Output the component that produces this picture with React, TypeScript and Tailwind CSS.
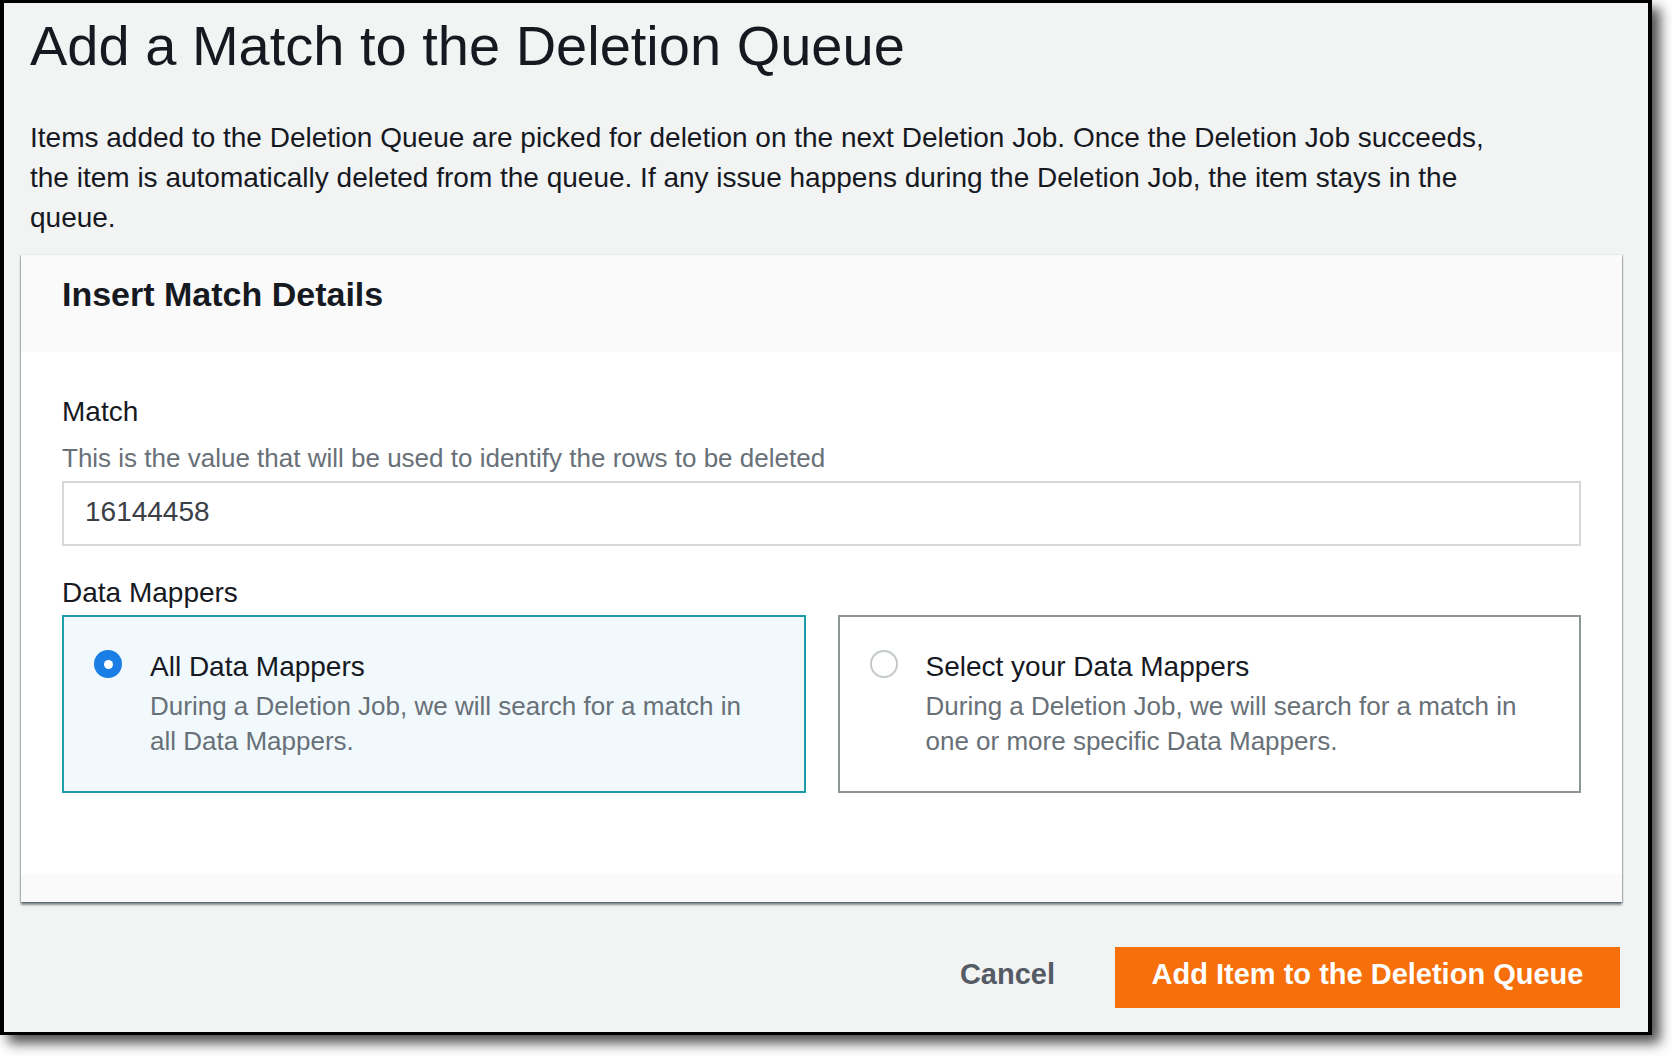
import React from "react";

function Radio({ checked }: { checked: boolean }) {
  if (checked) {
    return (
      <div className="mt-[3px] flex h-[28px] w-[28px] shrink-0 items-center justify-center rounded-full bg-[#1b7ee6]">
        <div className="h-[9px] w-[9px] rounded-full bg-white" />
      </div>
    );
  }
  return (
    <div className="mt-[3px] h-[28px] w-[28px] shrink-0 rounded-full border-2 border-[#c3c9cc] bg-white" />
  );
}

function Tile({
  checked,
  title,
  desc,
}: {
  checked: boolean;
  title: string;
  desc: string;
}) {
  return (
    <div
      className={
        checked
          ? "flex h-[178px] gap-[28px] border-2 border-[#1d9cab] bg-[#f1f9fd] pl-[30px] pr-[44px] pt-[30px]"
          : "flex h-[178px] gap-[28px] border-2 border-[#8d9596] bg-white pl-[30px] pr-[44px] pt-[30px]"
      }
    >
      <Radio checked={checked} />
      <div className="flex flex-col">
        <div className="text-[28px] leading-[40px] text-[#16191f]">{title}</div>
        <div className="mt-[2px] text-[26px] leading-[35px] text-[#687078]">{desc}</div>
      </div>
    </div>
  );
}

export default function App() {
  return (
    <div className="h-[1056px] w-[1672px] bg-white font-['Liberation_Sans',Arial,Helvetica,sans-serif]">
      <div className="flex h-[1035px] w-[1652px] flex-col border-x-4 border-y-[3px] border-black bg-[#f2f3f3] shadow-[8px_8px_12px_rgba(0,0,0,0.7)]">
        <h1 className="ml-[26px] mt-[11px] text-[56px] font-normal leading-[64px] text-[#16191f]">
          Add a Match to the Deletion Queue
        </h1>
        <p className="ml-[26px] mt-[40px] w-[1475px] text-[28px] leading-[40px] text-[#16191f]">
          Items added to the Deletion Queue are picked for deletion on the next Deletion Job. Once the
          Deletion Job succeeds, the item is automatically deleted from the queue. If any issue happens
          during the Deletion Job, the item stays in the queue.
        </p>

        <div className="ml-[17px] mr-[26px] mt-[16px] flex flex-col border-t border-[#e6eaea] bg-white shadow-[1px_1px_1px_rgba(0,28,36,0.18),-1px_1px_1px_rgba(0,28,36,0.18),0_3px_2px_rgba(0,28,36,0.45)]">
          <div className="h-[97px] bg-[#fafafa] pl-[41px] pt-[19px]">
            <h2 className="text-[34px] font-bold leading-[40px] text-[#16191f]">Insert Match Details</h2>
          </div>
          <div className="flex flex-col px-[41px] pb-[81px] pt-[40px]">
            <div className="text-[28px] leading-[40px] text-[#16191f]">Match</div>
            <div className="mt-[6px] text-[26px] leading-[40px] text-[#687078]">
              This is the value that will be used to identify the rows to be deleted
            </div>
            <div className="mt-[3px] flex h-[65px] items-center border-2 border-[#d5d9da] bg-white pb-[3px] pl-[21px] text-[28px] text-[#3b4047]">
              16144458
            </div>
            <div className="mt-[27px] text-[28px] leading-[40px] text-[#16191f]">Data Mappers</div>
            <div className="mt-[2px] grid grid-cols-2 gap-[32px]">
              <Tile
                checked
                title="All Data Mappers"
                desc="During a Deletion Job, we will search for a match in all Data Mappers."
              />
              <Tile
                checked={false}
                title="Select your Data Mappers"
                desc="During a Deletion Job, we will search for a match in one or more specific Data Mappers."
              />
            </div>
          </div>
          <div className="h-[28px] bg-[#fafafa]" />
        </div>

        <div className="mt-[45px] flex items-center justify-end gap-[30px] pr-[28px]">
          <button className="h-[61px] px-[30px] pb-[5px] text-[29px] font-bold text-[#545b64]">Cancel</button>
          <button className="h-[61px] w-[505px] bg-[#f66f0a] pb-[5px] text-[29px] font-bold text-white">
            Add Item to the Deletion Queue
          </button>
        </div>
      </div>
    </div>
  );
}
